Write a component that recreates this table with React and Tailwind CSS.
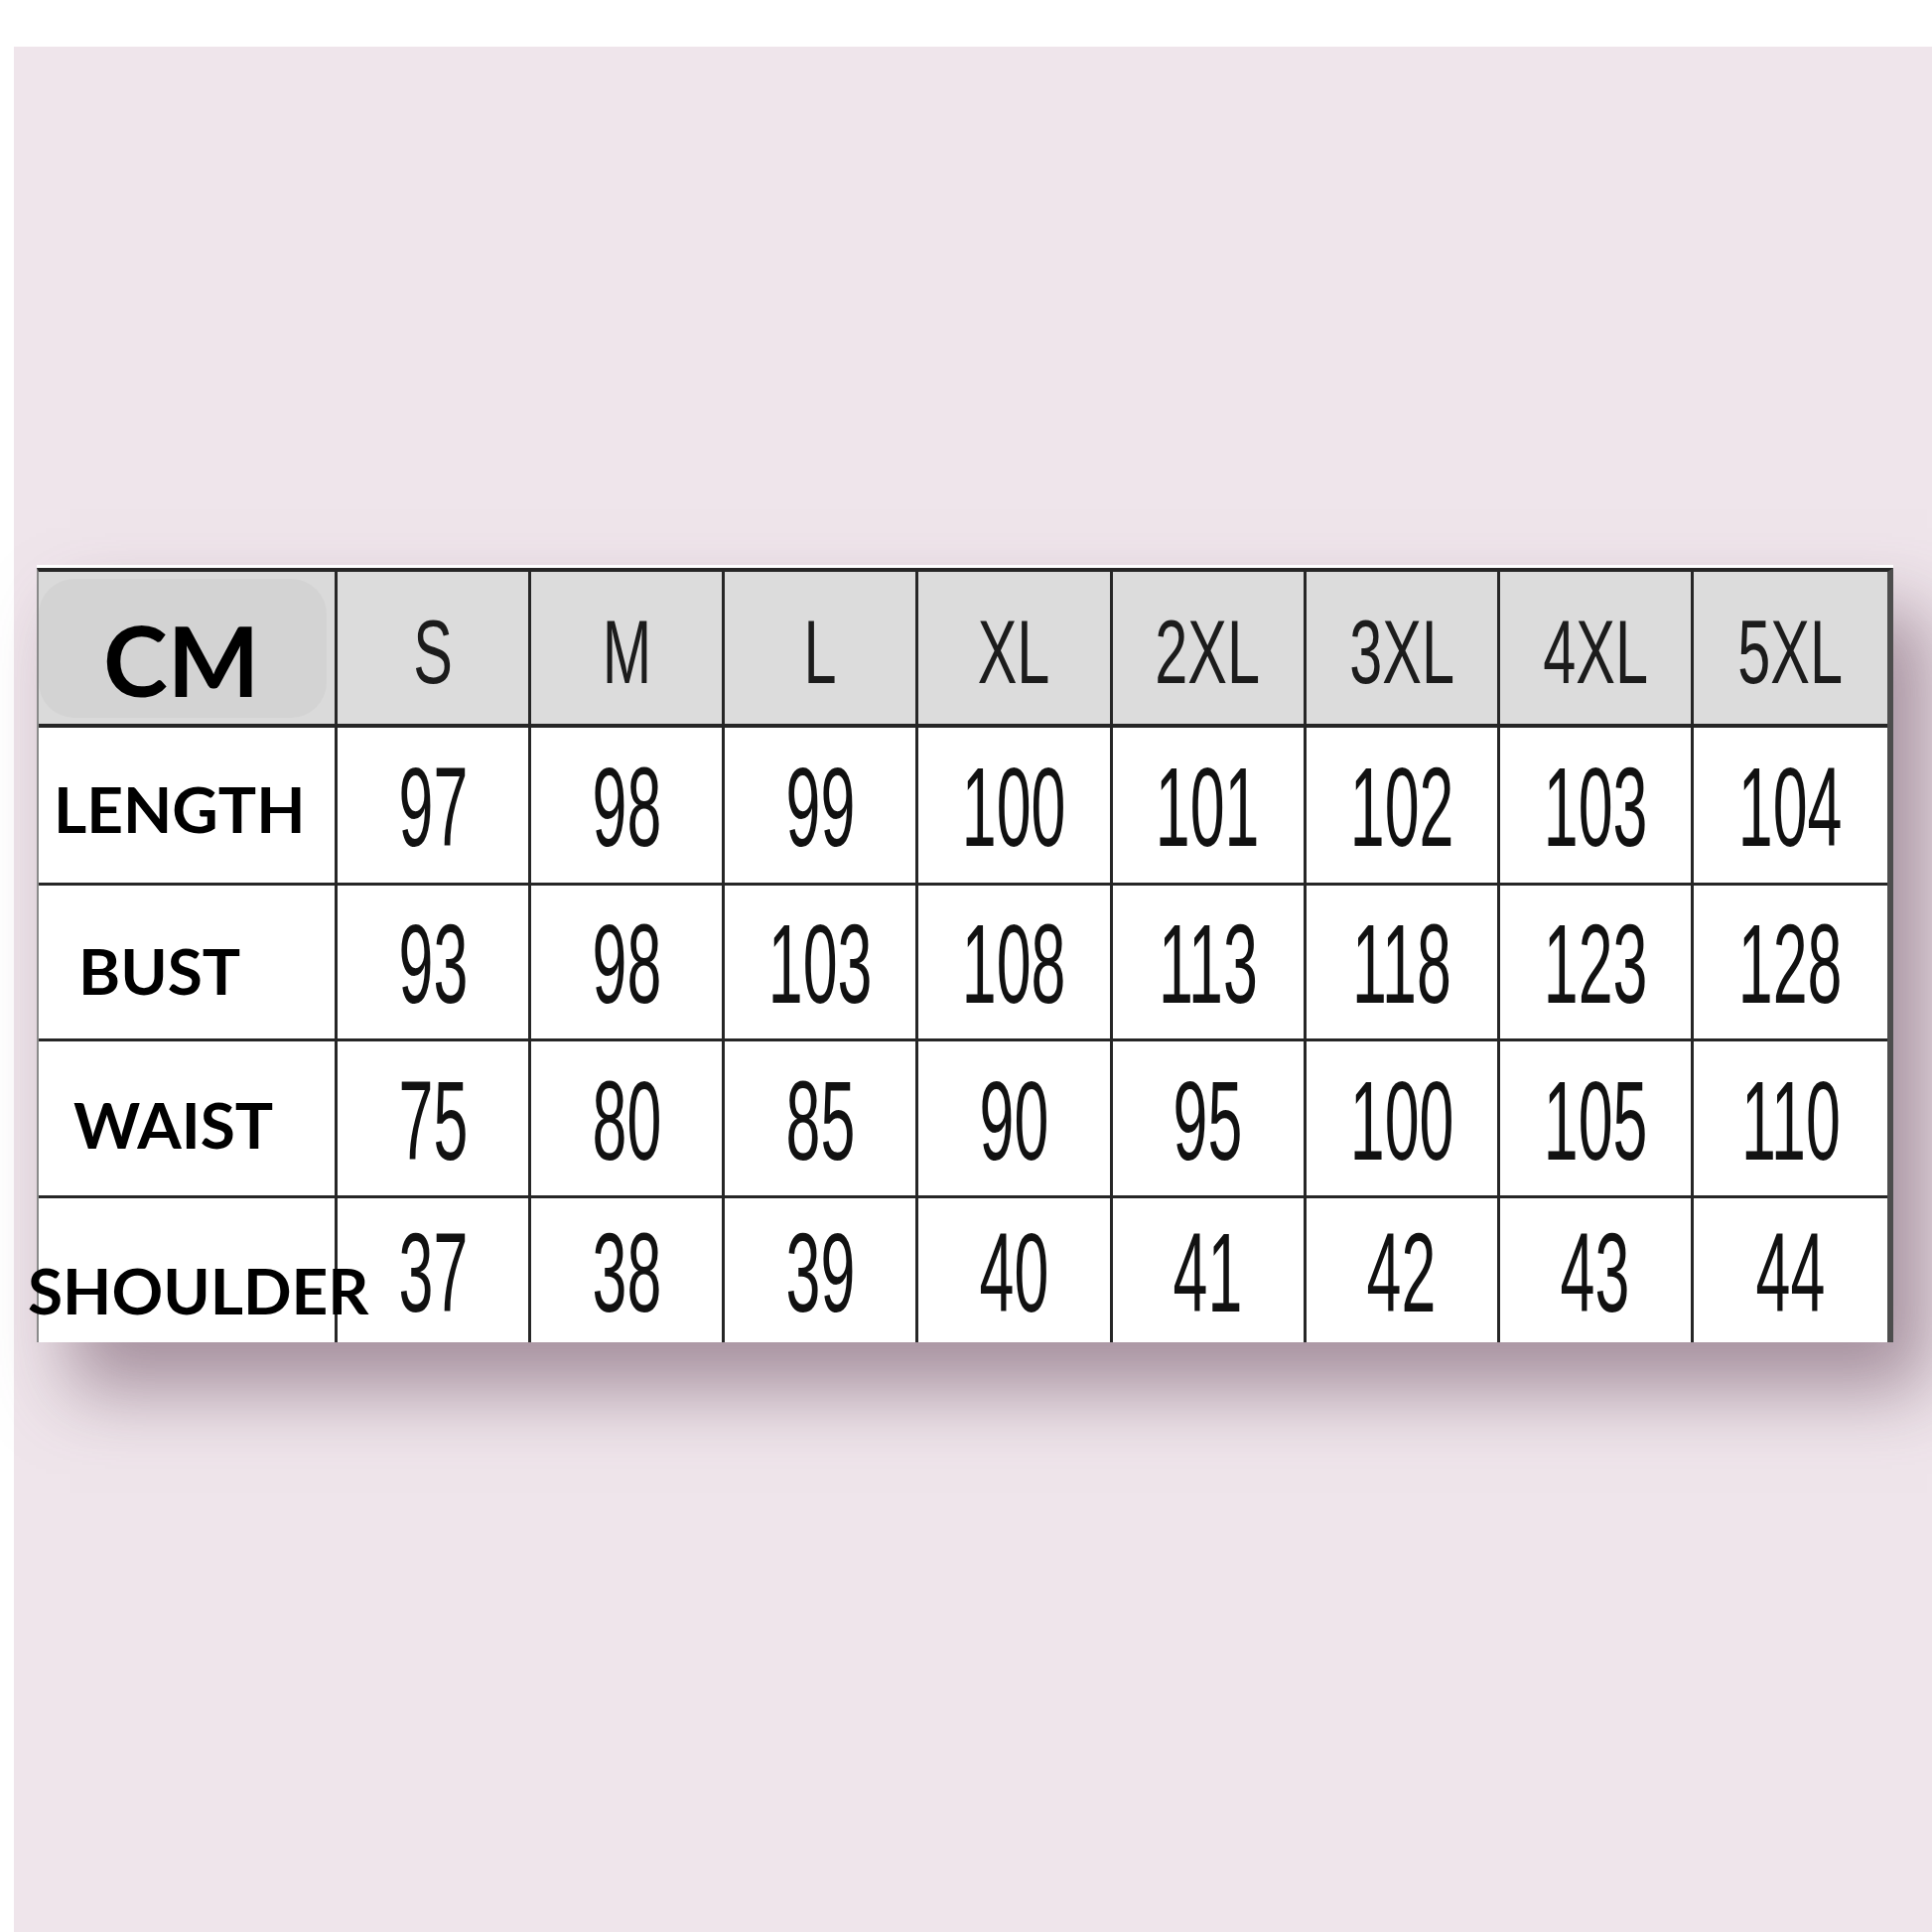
import React from 'react';

const sizes = ['S', 'M', 'L', 'XL', '2XL', '3XL', '4XL', '5XL'];

const rows = [
    { label: 'LENGTH', pad: 'pl-[15px] pt-[8px]', h: 'h-[159px]', values: [97, 98, 99, 100, 101, 102, 103, 104] },
    { label: 'BUST', pad: 'pl-[40px] pt-[18px]', h: 'h-[157px]', values: [93, 98, 103, 108, 113, 118, 123, 128] },
    { label: 'WAIST', pad: 'pl-[35px] pt-[12px]', h: 'h-[158px]', values: [75, 80, 85, 90, 95, 100, 105, 110] },
    { label: 'SHOULDER', pad: '-ml-[11px] pt-[40px]', h: 'h-[145px]', values: [37, 38, 39, 40, 41, 42, 43, 44], last: true },
];

const labelFont = { fontFamily: 'Lato, "Open Sans", sans-serif' };
const cellFont = { fontFamily: '"Liberation Sans", Arial, sans-serif' };

const App = () => {
    return (
        <div className="w-[1946px] h-[1946px] bg-white pt-[47px] pl-[14px] flex">
            <div className="flex-1 bg-[#efe5eb] pt-[522px] pl-[23px]">
                <div className="w-[1870px] bg-white pt-[3px] shadow-[34px_48px_70px_rgba(105,75,95,0.55)]">
                    <div className="border-t-[4px] border-t-[#262626] border-l-[2px] border-l-[#8a8a8a] border-r-[6px] border-r-[#4d4d4d] grid grid-cols-[301px_repeat(8,1fr)]" style={cellFont}>
                        <div className="h-[157px] bg-[#dadada] border-r-[3px] border-b-[4px] border-[#262626] flex items-center">
                            <div className="w-[290px] h-[140px] rounded-[36px] bg-[#d3d3d3] flex items-center pl-[65px] pt-[22px]">
                                <span className="text-[98px] leading-none font-bold text-black" style={labelFont}>CM</span>
                            </div>
                        </div>
                        {sizes.map((s, i) => (
                            <div key={s} className={`h-[157px] bg-[#dcdcdc] border-b-[4px] border-[#262626] flex items-center justify-center pt-[8px] ${i < 7 ? 'border-r-[3px]' : ''}`}>
                                <span className="inline-block text-[90px] leading-none text-[#1c1c1c] scale-x-[0.66]">{s}</span>
                            </div>
                        ))}
                        {rows.map((r) => (
                            <React.Fragment key={r.label}>
                                <div className={`${r.h} relative z-10 border-r-[3px] border-[#262626] flex items-center ${r.last ? '' : 'border-b-[3px]'}`}>
                                    <span className={`${r.pad} whitespace-nowrap text-[64px] leading-none font-bold text-black`} style={labelFont}>{r.label}</span>
                                </div>
                                {r.values.map((v, i) => (
                                    <div key={i} className={`${r.h} border-[#262626] flex items-center justify-center pt-[4px] ${i < 7 ? 'border-r-[3px]' : ''} ${r.last ? '' : 'border-b-[3px]'}`}>
                                        <span className="inline-block text-[114px] leading-none text-[#111] scale-x-[0.55]">{v}</span>
                                    </div>
                                ))}
                            </React.Fragment>
                        ))}
                    </div>
                </div>
            </div>
        </div>
    );
};

export default App;
